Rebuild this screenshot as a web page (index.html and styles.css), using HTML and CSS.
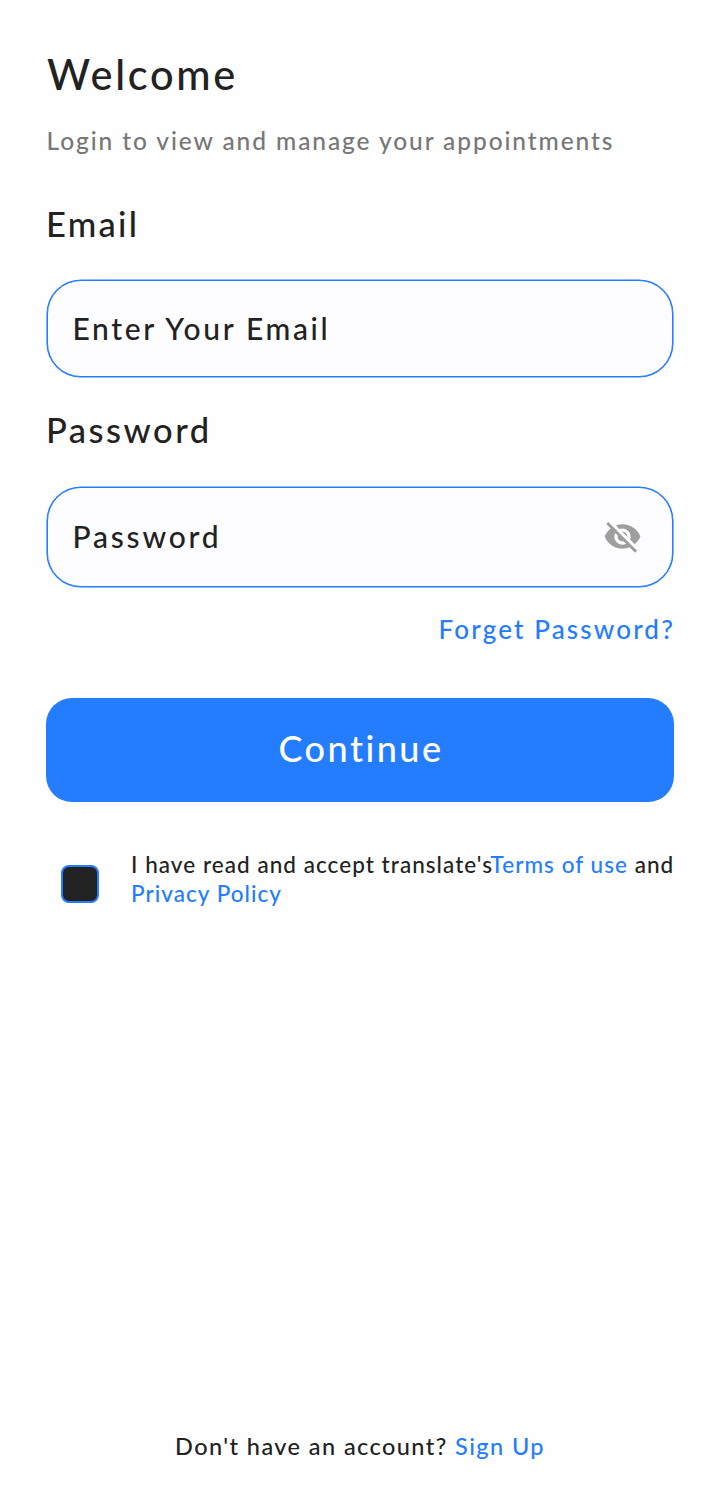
FILE: index.html
```html
<!DOCTYPE html>
<html lang="en">
<head>
<meta charset="utf-8">
<title>Welcome</title>
<link rel="stylesheet" href="styles.css">
</head>
<body>
<main class="screen">
  <h1 class="title"><span>Welcome</span></h1>
  <p class="subtitle"><span>Login to view and manage your appointments</span></p>
  <div class="label label-email"><span>Email</span></div>
  <div class="field field-email"><span class="hint-email">Enter Your Email</span></div>
  <div class="label label-password"><span>Password</span></div>
  <div class="field field-password">
    <span class="hint-password">Password</span>
    <svg class="eye" viewBox="0 0 24 24" aria-hidden="true"><path fill="#9e9e9e" d="M12 7c2.76 0 5 2.24 5 5 0 .65-.13 1.26-.36 1.83l2.92 2.92c1.51-1.26 2.7-2.89 3.43-4.75-1.73-4.39-6-7.5-11-7.5-1.4 0-2.74.25-3.98.7l2.16 2.16C10.74 7.13 11.35 7 12 7zM2 4.27l2.28 2.28.46.46C3.08 8.3 1.78 10.02 1 12c1.73 4.39 6 7.5 11 7.5 1.55 0 3.03-.3 4.38-.84l.42.42L19.73 22 21 20.73 3.27 3 2 4.27zM7.53 9.8l1.55 1.55c-.05.21-.08.43-.08.65 0 1.66 1.34 3 3 3 .22 0 .44-.03.65-.08l1.55 1.55c-.67.33-1.41.53-2.2.53-2.76 0-5-2.24-5-5 0-.79.2-1.53.53-2.2zm4.31-.78l3.15 3.15.02-.16c0-1.66-1.34-3-3-3l-.17.01z"/></svg>
  </div>
  <a class="forgot"><span>Forget Password?</span></a>
  <button class="continue"><span>Continue</span></button>
  <div class="consent">
    <span class="checkbox"></span>
    <p class="terms"><span class="terms-first">I have read and accept translate's<a class="link">Terms of use</a> and</span><br><a class="link privacy">Privacy Policy</a></p>
  </div>
  <p class="signup"><span>Don't have an account? <a class="link">Sign Up</a></span></p>
</main>
</body>
</html>
```
FILE: styles.css
```css
* { box-sizing: border-box; }
body {
  margin: 0;
  background: #fefefe;
  color: #222;
  font-family: Lato, "Open Sans", sans-serif;
  font-weight: 500;
}
h1, p { margin: 0; font-weight: 500; white-space: nowrap; }
.screen {
  display: flex;
  flex-direction: column;
  width: 720px;
  height: 1510px;
  padding: 50px 46px 49px;
}
.title { font-size: 41.5px; line-height: 48px; letter-spacing: 2.7px; padding-left: 1px; }
.subtitle { margin-top: 28px; font-size: 24.5px; line-height: 30px; letter-spacing: 1.91px; padding-left: 0.5px; color: #777; }
.label { font-size: 34.5px; line-height: 40px; letter-spacing: 2.3px; }
.label-email { margin-top: 48px; }
.label-password { margin-top: 33px; letter-spacing: 2.5px; }
.field {
  display: flex;
  align-items: center;
  justify-content: space-between;
  border: 1px solid #247cff;
  box-shadow: 0 0 0 0.6px #247cff;
  border-radius: 34px;
  background: #fdfdff;
  margin: 0 1px;
  padding: 0 30px 2px 24.5px;
  font-size: 30px;
  line-height: 36px;
}
.field-email { height: 97px; margin-top: 36px; letter-spacing: 2.65px; }
.field-password { height: 100px; margin-top: 37px; letter-spacing: 2.8px; }
.eye { width: 39px; height: 39px; }
.forgot { align-self: flex-end; margin: 26px -1px 0 0; font-size: 26px; line-height: 32px; letter-spacing: 2.15px; color: #247cff; }
.continue {
  height: 104px;
  margin-top: 53px;
  padding: 0 0 4px 2px;
  border: 0;
  border-radius: 26px;
  background: #247cff;
  color: #fff;
  font: inherit;
  font-size: 36px;
  letter-spacing: 2.5px;
}
.consent { display: flex; margin-top: 48px; padding-left: 15px; }
.checkbox {
  flex: none;
  width: 38px;
  height: 38px;
  margin: 15px 32px 0 0;
  border: 2px solid #247cff;
  border-radius: 8px;
  background: #222;
}
.terms { font-size: 22.5px; line-height: 29px; letter-spacing: 1.04px; }
.link { color: #247cff; }
.signup { margin-top: auto; text-align: center; font-size: 23.5px; line-height: 30px; letter-spacing: 1.42px; }
```
